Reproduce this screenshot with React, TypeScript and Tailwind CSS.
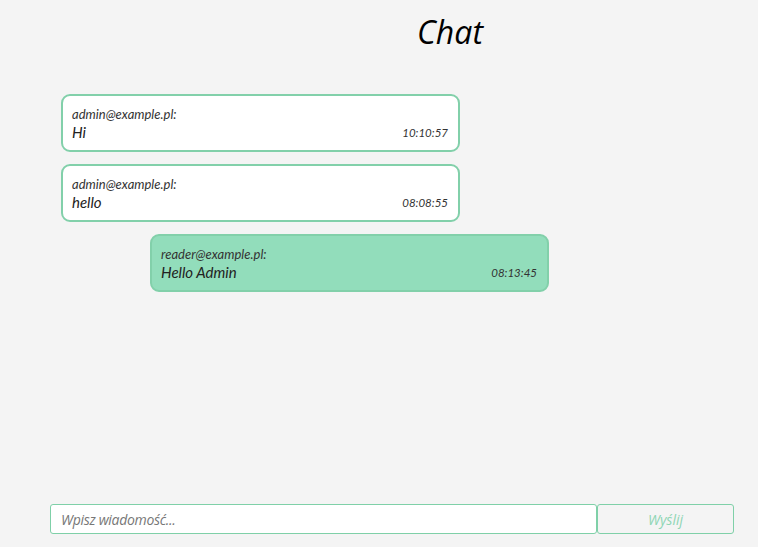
import React from "react";

const msgs = [
  { from: "admin@example.pl:", text: "Hi", time: "10:10:57", mine: false },
  { from: "admin@example.pl:", text: "hello", time: "08:08:55", mine: false },
  { from: "reader@example.pl:", text: "Hello Admin", time: "08:13:45", mine: true },
];

export default function App() {
  return (
    <div className="flex h-[547px] w-full flex-col bg-[#f4f4f4]" style={{ fontFamily: "Lato, 'Open Sans', sans-serif" }}>
      <div className="flex justify-center pl-[142px] pt-[11px]">
        <h1 className="text-[32px] italic leading-[42px] text-black" style={{ fontFamily: "'Open Sans', sans-serif" }}>
          Chat
        </h1>
      </div>
      <div className="mt-[41px] flex flex-col gap-[12px] pl-[61px]">
        {msgs.map((m, i) => (
          <div
            key={i}
            className={`w-[399px] rounded-[9px] border-2 border-[#82d0aa] px-[9px] pt-[9px] pb-[9px] italic text-[#222] ${
              m.mine ? "ml-[89px] bg-[#92ddbb]" : "bg-white"
            }`}
          >
            <div className="text-[13px] leading-[18px] text-[#333]">{m.from}</div>
            <div className="flex items-end justify-between">
              <span className="text-[15px] leading-[18px]">{m.text}</span>
              <span className="pr-[1px] text-[11.5px] leading-[17px] text-[#333]">{m.time}</span>
            </div>
          </div>
        ))}
      </div>
      <div className="mt-auto flex pb-[13px] pl-[50px]">
        <input
          placeholder="Wpisz wiadomość..."
          className="h-[30px] w-[547px] rounded-[3px] border border-[#7fd0a8] bg-white px-[10px] text-[14px] italic text-[#333] outline-none placeholder:text-[#777]"
          style={{ fontFamily: "'Open Sans', sans-serif", letterSpacing: "-0.3px" }}
        />
        <button
          className="h-[30px] w-[137px] rounded-[3px] border border-[#7fd0a8] bg-[#f4f4f4] text-[14px] italic text-[#8fd6b4]"
          style={{ fontFamily: "'Open Sans', sans-serif" }}
        >
          Wyślij
        </button>
      </div>
    </div>
  );
}
